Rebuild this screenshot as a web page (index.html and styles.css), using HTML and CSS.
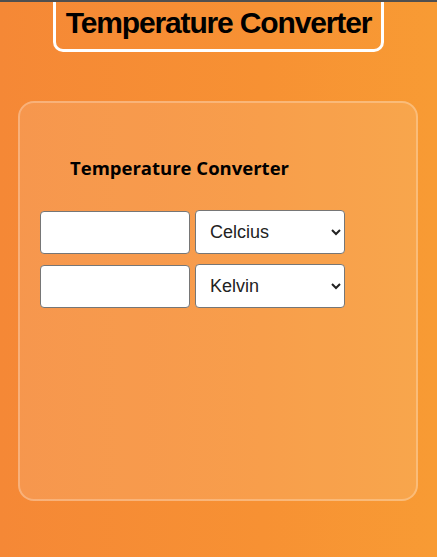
FILE: index.html
```html
<!DOCTYPE html>
<html>
<head>
<meta charset="utf-8">
<link rel="stylesheet" href="styles.css">
</head>
<body>
<div class="topline"></div>
<header class="title-box">
  <h1 class="title">Temperature Converter</h1>
</header>
<main class="card">
  <h2 class="card-title">Temperature Converter</h2>
  <div class="row">
    <input class="field" type="text">
    <select class="unit">
      <option>Celcius</option>
      <option>Fahrenheit</option>
      <option>Kelvin</option>
    </select>
  </div>
  <div class="row">
    <input class="field" type="text">
    <select class="unit">
      <option>Kelvin</option>
      <option>Celcius</option>
      <option>Fahrenheit</option>
    </select>
  </div>
</main>
</body>
</html>
```
FILE: styles.css
```css
html, body {
  margin: 0;
  padding: 0;
  height: 100%;
}
body {
  background: linear-gradient(90deg, #f58836 0%, #f79133 60%, #f89b34 100%);
  font-family: "Liberation Sans", Arial, sans-serif;
  overflow: hidden;
}
.topline {
  height: 2px;
  background: #4f4f4f;
}
.title-box {
  width: 325px;
  height: 47px;
  margin: 0 auto;
  border: 3px solid #fff;
  border-top: none;
  border-radius: 0 0 10px 10px;
  display: flex;
  justify-content: center;
  align-items: center;
}
.title {
  margin: 0;
  font-size: 30px;
  font-weight: 700;
  letter-spacing: -1.15px;
  color: #000;
  line-height: 1;
  padding-bottom: 5px;
}
.card {
  margin: 49px 19px 0 18px;
  height: 400px;
  border: 2px solid rgba(255, 255, 255, 0.25);
  border-radius: 16px;
  background: rgba(255, 255, 255, 0.12);
  padding: 52px 0 0 20px;
  box-sizing: border-box;
}
.card-title {
  margin: 0 0 30px 30px;
  font-family: "Open Sans", "Noto Sans", sans-serif;
  font-size: 18.5px;
  font-weight: 700;
  line-height: 25px;
  color: #000;
}
.row {
  display: flex;
  gap: 5px;
  margin-bottom: 10px;
  align-items: center;
}
.field {
  width: 150px;
  height: 43px;
  box-sizing: border-box;
  border: 1px solid #767676;
  border-radius: 4px;
  background: #fff;
  margin: 0;
}
.unit {
  width: 150px;
  height: 44px;
  box-sizing: border-box;
  border: 1px solid #767676;
  border-radius: 4px;
  background: #fff;
  font-family: "Liberation Sans", Arial, sans-serif;
  font-size: 18px;
  color: #222;
  padding: 0 8px 0 10px;
  margin: 0;
}
```
